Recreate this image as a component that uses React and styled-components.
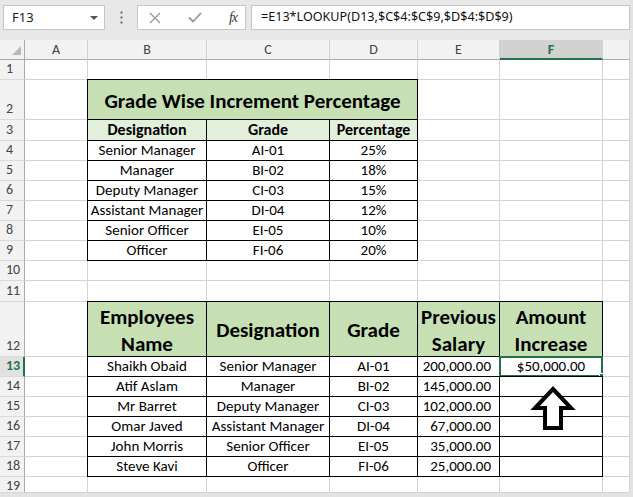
import React from 'react';
import styled, { createGlobalStyle, css } from 'styled-components';

const CELL_FONT = `Carlito, Lato, "Open Sans", sans-serif`;
const UI_FONT = `"Noto Sans", "Open Sans", sans-serif`;
const GREEN = '#217346';

const GlobalStyle = createGlobalStyle`
  html, body { margin: 0; padding: 0; background: #fff; }
  body { width: 633px; height: 497px; overflow: hidden; }
`;

const Window = styled.div`
  width: 633px;
  height: 497px;
  box-sizing: border-box;
  padding: 0 3px 4px 0;
  background: #e3e3e3;
  display: flex;
  flex-direction: column;
  overflow: hidden;
`;

const Toolbar = styled.div`
  height: 40px;
  flex: none;
  box-sizing: border-box;
  padding: 5px 0 0 3px;
  display: flex;
  align-items: flex-start;
  background: #e8e8e8;
`;

const Box = styled.div`
  height: 25px;
  box-sizing: border-box;
  background: #fff;
  border: 1px solid #c6c6c6;
  display: flex;
  align-items: center;
  font: 13px/1 ${UI_FONT};
  color: #222;
`;

const NameBox = styled(Box)`
  width: 102px;
  justify-content: space-between;
  padding: 0 6px 0 8px;
`;

const Caret = styled.span`
  width: 0;
  height: 0;
  border-left: 4px solid transparent;
  border-right: 4px solid transparent;
  border-top: 4px solid #555;
`;

const Grip = styled.div`
  width: 32px;
  height: 25px;
  display: flex;
  align-items: center;
  justify-content: center;
`;

const FuncBox = styled(Box)`
  width: 109px;
  padding: 0 8px 0 11px;
  justify-content: space-between;
`;

const Fx = styled.span`
  font: italic 14px/1 "Liberation Serif", serif;
  color: #333;
  letter-spacing: -1px;
`;

const FormulaBox = styled(Box)`
  flex: 1;
  margin-left: 5px;
  padding-left: 9px;
  font-size: 12.6px;
  color: #111;
`;

const Sheet = styled.div`
  position: relative;
  display: grid;
  grid-template-columns: 25px 63px 119px 123px 88px 82px 103px 27px;
  grid-template-rows: 20px 20px 40px 21px 20px 20px 20px 20px 20px 20px 20px 21px 55px 20px 20px 20px 20px 20px 20px 16px;
  background: #fff;
  overflow: hidden;
`;

const ColHead = styled.div`
  box-sizing: border-box;
  background: ${p => (p.$active ? '#d2d2d2' : '#f2f2f2')};
  border-right: 1px solid #d0d0d0;
  border-bottom: ${p => (p.$active ? `2px solid ${GREEN}` : '1px solid #ababab')};
  display: flex;
  align-items: center;
  justify-content: center;
  padding-top: ${p => (p.$active ? '1px' : '0')};
  font: ${p => (p.$active ? 700 : 400)} 14px/1 ${CELL_FONT};
  color: ${p => (p.$active ? GREEN : '#444')};
`;

const Corner = styled(ColHead)`
  position: relative;
  border-right-color: #ababab;
  &::after {
    content: '';
    position: absolute;
    right: 3px;
    bottom: 4px;
    width: 9px;
    height: 9px;
    background: #b8b8b8;
    clip-path: polygon(100% 0, 100% 100%, 0 100%);
  }
`;

const RowHead = styled.div`
  box-sizing: border-box;
  overflow: hidden;
  background: ${p => (p.$active ? '#e1e1e1' : '#f2f2f2')};
  border-right: ${p => (p.$active ? `2px solid ${GREEN}` : '1px solid #ababab')};
  border-bottom: 1px solid #dadada;
  display: flex;
  align-items: ${p => (p.$clipped ? 'flex-start' : 'flex-end')};
  padding: ${p => (p.$clipped ? '2px 0 0 6px' : '0 0 3px 6px')};
  font: ${p => (p.$active ? 700 : 400)} 14px/1 ${CELL_FONT};
  color: ${p => (p.$active ? GREEN : '#444')};
`;

const Cell = styled.div`
  position: relative;
  box-sizing: border-box;
  grid-column: span ${p => p.$span || 1};
  border-right: 1px solid #d4d4d4;
  border-bottom: 1px solid #d4d4d4;
  background: ${p => p.$bg || '#fff'};
  display: flex;
  align-items: ${p => (p.$big ? 'center' : 'flex-end')};
  justify-content: ${p => (p.$right ? 'flex-end' : 'center')};
  padding: ${p => (p.$right ? '0 8px 1px 2px' : p.$big ? '0 1px' : '0 1px 1px')};
  font: ${p => (p.$bold ? 700 : 400)} ${p => p.$size || 15}px/1.2 ${CELL_FONT};
  color: #000;
  white-space: nowrap;
  text-align: center;
  ${p =>
    p.$boxed &&
    css`
      border-right-color: #000;
      border-bottom-color: #000;
      box-shadow: 0 -1px 0 #000, -1px 0 0 #000, -1px -1px 0 #000;
    `}
  ${p =>
    p.$selected &&
    css`
      &::before {
        content: '';
        position: absolute;
        left: -1px;
        top: -1px;
        right: -1px;
        bottom: -1px;
        border: 2px solid ${GREEN};
      }
      &::after {
        content: '';
        position: absolute;
        right: -3px;
        bottom: -3px;
        width: 5px;
        height: 5px;
        background: ${GREEN};
        border-left: 1px solid #fff;
        border-top: 1px solid #fff;
      }
    `}
`;

const Line = styled.span`
  display: block;
  line-height: 27px;
  padding-top: ${p => p.$pt || 0}px;
`;

const ArrowMark = styled.svg`
  position: absolute;
  left: 528px;
  top: 340px;
  width: 52px;
  height: 52px;
  pointer-events: none;
`;

const LIGHT = '#c6e0b4';
const PALE = '#e2efda';

const table1 = [
  ['Senior Manager', 'AI-01', '25%'],
  ['Manager', 'BI-02', '18%'],
  ['Deputy Manager', 'CI-03', '15%'],
  ['Assistant Manager', 'DI-04', '12%'],
  ['Senior Officer', 'EI-05', '10%'],
  ['Officer', 'FI-06', '20%'],
];

const table2 = [
  ['Shaikh Obaid', 'Senior Manager', 'AI-01', '200,000.00', '$50,000.00'],
  ['Atif Aslam', 'Manager', 'BI-02', '145,000.00', ''],
  ['Mr Barret', 'Deputy Manager', 'CI-03', '102,000.00', ''],
  ['Omar Javed', 'Assistant Manager', 'DI-04', '67,000.00', ''],
  ['John Morris', 'Senior Officer', 'EI-05', '35,000.00', ''],
  ['Steve Kavi', 'Officer', 'FI-06', '25,000.00', ''],
];

const headers2 = [['Employees', 'Name'], ['Designation'], ['Grade'], ['Previous', 'Salary'], ['Amount', 'Increase']];

const letters = ['A', 'B', 'C', 'D', 'E', 'F', ''];

function Empty({ n = 1 }) {
  return Array.from({ length: n }, (_, i) => <Cell key={i} />);
}

export default function App() {
  return (
    <>
      <GlobalStyle />
      <Window>
        <Toolbar>
          <NameBox>
            <span>F13</span>
            <Caret />
          </NameBox>
          <Grip>
            <svg width="3" height="13" viewBox="0 0 3 13">
              <rect x="0.5" y="0.5" width="2" height="2" fill="#666" />
              <rect x="0.5" y="5.5" width="2" height="2" fill="#666" />
              <rect x="0.5" y="10.5" width="2" height="2" fill="#666" />
            </svg>
          </Grip>
          <FuncBox>
            <svg width="12" height="12" viewBox="0 0 12 12">
              <path d="M1 1 L11 11 M11 1 L1 11" stroke="#9a9a9a" strokeWidth="1.3" fill="none" />
            </svg>
            <svg width="14" height="11" viewBox="0 0 14 11">
              <path d="M1 5.5 L5 9.5 L13 1" stroke="#9a9a9a" strokeWidth="1.8" fill="none" />
            </svg>
            <Fx>fx</Fx>
          </FuncBox>
          <FormulaBox>=E13*LOOKUP(D13,$C$4:$C$9,$D$4:$D$9)</FormulaBox>
        </Toolbar>

        <Sheet>
          <Corner />
          {letters.map((l, i) => (
            <ColHead key={i} $active={l === 'F'}>{l}</ColHead>
          ))}

          <RowHead>1</RowHead>
          <Empty n={7} />

          <RowHead>2</RowHead>
          <Cell />
          <Cell $span={3} $bg={LIGHT} $bold $big $size={21} $boxed>
            <Line $pt={3}>Grade Wise Increment Percentage</Line>
          </Cell>
          <Empty n={3} />

          <RowHead>3</RowHead>
          <Cell />
          <Cell $bg={PALE} $bold $size={16} $boxed>Designation</Cell>
          <Cell $bg={PALE} $bold $size={16} $boxed>Grade</Cell>
          <Cell $bg={PALE} $bold $size={16} $boxed>Percentage</Cell>
          <Empty n={3} />

          {table1.map((r, i) => (
            <React.Fragment key={i}>
              <RowHead>{i + 4}</RowHead>
              <Cell />
              {r.map((v, j) => (
                <Cell key={j} $boxed>{v}</Cell>
              ))}
              <Empty n={3} />
            </React.Fragment>
          ))}

          <RowHead>10</RowHead>
          <Empty n={7} />
          <RowHead>11</RowHead>
          <Empty n={7} />

          <RowHead>12</RowHead>
          <Cell />
          {headers2.map((h, i) => (
            <Cell key={i} $bg={LIGHT} $bold $big $size={21} $boxed>
              <div>
                {h.map((t, k) => (
                  <Line key={k} $pt={k === 0 ? 3 : 0}>{t}</Line>
                ))}
              </div>
            </Cell>
          ))}
          <Cell />

          {table2.map((r, i) => (
            <React.Fragment key={i}>
              <RowHead $active={i === 0}>{i + 13}</RowHead>
              <Cell />
              <Cell $boxed>{r[0]}</Cell>
              <Cell $boxed>{r[1]}</Cell>
              <Cell $boxed>{r[2]}</Cell>
              <Cell $boxed $right>{r[3]}</Cell>
              <Cell $boxed $selected={i === 0}>{r[4]}</Cell>
              <Cell />
            </React.Fragment>
          ))}

          <RowHead $clipped>19</RowHead>
          <Empty n={7} />

          <ArrowMark viewBox="528 380 52 52">
            <polygon
              points="553,389 571,408 561,408 561,428 545,428 545,408 535,408"
              fill="#fff"
              stroke="#000"
              strokeWidth="4"
              strokeLinejoin="miter"
            />
          </ArrowMark>
        </Sheet>
      </Window>
    </>
  );
}
